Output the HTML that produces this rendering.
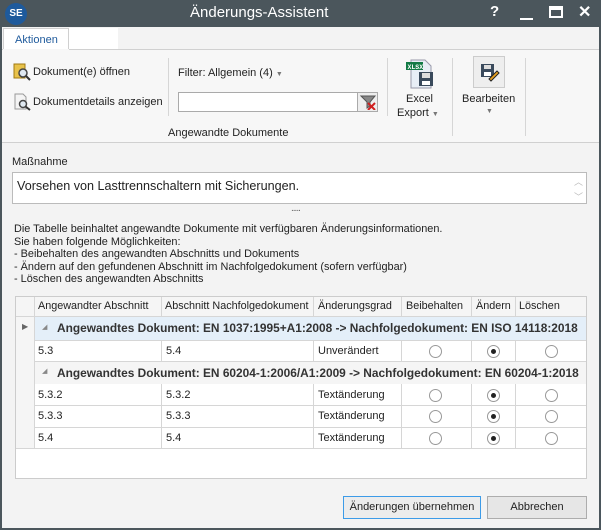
<!DOCTYPE html>
<html><head><meta charset="utf-8">
<style>
*{box-sizing:border-box;margin:0;padding:0}
html,body{width:601px;height:530px}
body{background:#4b565c;font-family:"Liberation Sans",sans-serif;font-size:11px;color:#222;position:relative;overflow:hidden}
.a{position:absolute}
.win{left:2px;top:27px;width:597px;height:501px;background:#f3f3f3}
.t{white-space:nowrap}
.radio{position:absolute;width:13px;height:13px;border:1px solid #999;border-radius:50%;background:#fff}
.radio.on::after{content:"";position:absolute;left:3px;top:3px;width:5px;height:5px;border-radius:50%;background:#222}
.hl{position:absolute;background:#d6d6d6;height:1px}
.vl{position:absolute;background:#d6d6d6;width:1px}
</style></head><body>
<div class="a" style="left:5px;top:3px;width:22px;height:22px;border-radius:50%;background:#1e5a9c;color:#fff;font-size:10px;font-weight:bold;text-align:center;line-height:22px">SE</div>
<div class="a t" style="left:190px;top:4px;color:#fff;font-size:15px">Änderungs-Assistent</div>
<div class="a t" style="left:490px;top:3px;color:#fff;font-size:15px;font-weight:bold">?</div>
<div class="a" style="left:520px;top:18px;width:13px;height:2px;background:#fff"></div>
<div class="a" style="left:549px;top:6px;width:14px;height:12px;border:2px solid #fff;border-top-width:4px"></div>
<div class="a t" style="left:578px;top:2px;color:#fff;font-size:16px;font-weight:bold">✕</div>
<div class="a win"></div>
<div class="a" style="left:3px;top:28px;width:66px;height:22px;background:#fff;border:1px solid #d0d0d0;border-bottom:none"></div>
<div class="a" style="left:69px;top:28px;width:49px;height:21px;background:#fff"></div>
<div class="a t" style="left:15px;top:34px;color:#1e5a9c">Aktionen</div>
<div class="a" style="left:2px;top:49px;width:597px;height:94px;background:#f7f7f7;border-top:1px solid #d0d0d0;border-bottom:1px solid #d0d0d0"></div>
<div class="a" style="left:3px;top:49px;width:66px;height:2px;background:#f7f7f7"></div>
<svg class="a" style="left:13px;top:63px" width="18" height="18"><rect x="1" y="1" width="11" height="14" fill="#e8c24a" stroke="#a07a10"/><circle cx="10" cy="10" r="4" fill="#dfe8f0" stroke="#444" stroke-width="1.5"/><line x1="13" y1="13" x2="17" y2="17" stroke="#333" stroke-width="2"/></svg>
<div class="a t" style="left:33px;top:66px">Dokument(e) öffnen</div>
<svg class="a" style="left:14px;top:93px" width="18" height="18"><path d="M1 1h8l3 3v12H1z" fill="#f4f4f4" stroke="#999"/><circle cx="9" cy="11" r="3.5" fill="#dfe8f0" stroke="#444" stroke-width="1.5"/><line x1="11.5" y1="13.5" x2="16" y2="17" stroke="#333" stroke-width="2"/></svg>
<div class="a t" style="left:33px;top:96px">Dokumentdetails anzeigen</div>
<div class="vl" style="left:168px;top:58px;height:58px"></div>
<div class="a t" style="left:178px;top:67px">Filter: Allgemein (4) <span style="font-size:7px;color:#777">▼</span></div>
<div class="a" style="left:178px;top:92px;width:180px;height:20px;background:#fff;border:1px solid #aaa"></div>
<div class="a" style="left:357px;top:92px;width:21px;height:20px;background:#eee;border:1px solid #aaa"></div>
<svg class="a" style="left:359px;top:94px" width="18" height="16"><path d="M2 2l6 6v6l3-2V8l5-6z" fill="#888" stroke="#555"/><path d="M9 9l7 7M16 9l-7 7" stroke="#d02020" stroke-width="2"/></svg>
<div class="a t" style="left:168px;top:127px">Angewandte Dokumente</div>
<div class="vl" style="left:387px;top:58px;height:58px"></div>
<svg class="a" style="left:403px;top:57px" width="32" height="32"><path d="M8 3h14l6 6v22H8z" fill="#e8eef6" stroke="#99a"/><rect x="3" y="5" width="17" height="8" fill="#127a45"/><text x="4.5" y="12" font-size="6.5" fill="#fff" font-family="Liberation Mono" font-weight="bold">XLSX</text><rect x="16" y="15" width="14" height="14" fill="#3a4a5c"/><rect x="19" y="16" width="8" height="5" fill="#ddd"/><rect x="19" y="24" width="8" height="4" fill="#fff"/></svg>
<div class="a t" style="left:406px;top:93px">Excel</div>
<div class="a t" style="left:397px;top:107px">Export <span style="font-size:7px;color:#777">▼</span></div>
<div class="vl" style="left:452px;top:58px;height:78px"></div>
<div class="a" style="left:473px;top:56px;width:32px;height:32px;border:1px solid #ccc;background:#eee"></div>
<svg class="a" style="left:478px;top:61px" width="22" height="22"><rect x="3" y="3" width="13" height="13" fill="#3a4a5c"/><rect x="6" y="4" width="7" height="4" fill="#ddd"/><rect x="6" y="11" width="7" height="4" fill="#fff"/><path d="M11 18l8-8 2 2-8 8z" fill="#e8a020" stroke="#222"/></svg>
<div class="a t" style="left:462px;top:93px">Bearbeiten</div>
<div class="a t" style="left:486px;top:108px;font-size:7px;color:#777">▼</div>
<div class="vl" style="left:525px;top:58px;height:78px"></div>

<div class="a t" style="left:12px;top:156px">Maßnahme</div>
<div class="a" style="left:12px;top:172px;width:575px;height:32px;background:#fff;border:1px solid #bbb"></div>
<div class="a t" style="left:17px;top:179px;font-size:12.6px">Vorsehen von Lasttrennschaltern mit Sicherungen.</div>
<div class="a t" style="left:574px;top:175px;color:#bbb;font-size:9px">︿</div>
<div class="a t" style="left:574px;top:190px;color:#bbb;font-size:9px">﹀</div>
<div class="a t" style="left:291px;top:203px;color:#666;font-size:10px;letter-spacing:-1px">.....</div>
<div class="a t" style="left:14px;top:223px;line-height:12.5px;font-size:10.9px">Die Tabelle beinhaltet angewandte Dokumente mit verfügbaren Änderungsinformationen.<br>Sie haben folgende Möglichkeiten:<br>- Beibehalten des angewandten Abschnitts und Dokuments<br>- Ändern auf den gefundenen Abschnitt im Nachfolgedokument (sofern verfügbar)<br>- Löschen des angewandten Abschnitts</div>

<div class="a" style="left:15px;top:296px;width:572px;height:183px;background:#fff;border:1px solid #ccc"></div>
<div class="a" style="left:16px;top:297px;width:570px;height:20px;background:#f5f5f5"></div>
<div class="a" style="left:16px;top:297px;width:18px;height:152px;background:#f5f5f5"></div>
<div class="a" style="left:34px;top:317px;width:552px;height:23px;background:#e4eff9"></div>
<div class="a" style="left:34px;top:362px;width:552px;height:22px;background:#f5f5f5"></div>
<div class="hl" style="left:16px;top:316px;width:570px"></div>
<div class="hl" style="left:34px;top:340px;width:552px"></div>
<div class="hl" style="left:34px;top:361px;width:552px"></div>
<div class="hl" style="left:34px;top:405px;width:552px"></div>
<div class="hl" style="left:34px;top:427px;width:552px"></div>
<div class="hl" style="left:16px;top:448px;width:570px"></div>
<div class="vl" style="left:34px;top:297px;height:152px"></div>
<div class="vl" style="left:161px;top:297px;height:20px"></div><div class="vl" style="left:313px;top:297px;height:20px"></div><div class="vl" style="left:401px;top:297px;height:20px"></div><div class="vl" style="left:471px;top:297px;height:20px"></div><div class="vl" style="left:515px;top:297px;height:20px"></div>
<div class="vl" style="left:161px;top:341px;height:20px"></div><div class="vl" style="left:313px;top:341px;height:20px"></div><div class="vl" style="left:401px;top:341px;height:20px"></div><div class="vl" style="left:471px;top:341px;height:20px"></div><div class="vl" style="left:515px;top:341px;height:20px"></div>
<div class="vl" style="left:161px;top:384px;height:64px"></div><div class="vl" style="left:313px;top:384px;height:64px"></div><div class="vl" style="left:401px;top:384px;height:64px"></div><div class="vl" style="left:471px;top:384px;height:64px"></div><div class="vl" style="left:515px;top:384px;height:64px"></div>
<div class="a t" style="left:38px;top:300px;font-size:10.8px">Angewandter Abschnitt</div>
<div class="a t" style="left:165px;top:300px;font-size:10.8px">Abschnitt Nachfolgedokument</div>
<div class="a t" style="left:318px;top:300px;font-size:10.8px">Änderungsgrad</div>
<div class="a t" style="left:406px;top:300px;font-size:10.8px">Beibehalten</div>
<div class="a t" style="left:476px;top:300px;font-size:10.8px">Ändern</div>
<div class="a t" style="left:519px;top:300px;font-size:10.8px">Löschen</div>
<div class="a t" style="left:22px;top:322px;font-size:8px;color:#666">▶</div>
<div class="a t" style="left:42px;top:323px;font-size:7px;color:#888">◢</div>
<div class="a t" style="left:57px;top:321px;font-weight:bold;font-size:11.9px;color:#333">Angewandtes Dokument: EN 1037:1995+A1:2008 -&gt; Nachfolgedokument: EN ISO 14118:2018</div>
<div class="a t" style="left:42px;top:367px;font-size:7px;color:#888">◢</div>
<div class="a t" style="left:57px;top:366px;font-weight:bold;font-size:11.9px;color:#333">Angewandtes Dokument: EN 60204-1:2006/A1:2009 -&gt; Nachfolgedokument: EN 60204-1:2018</div>
<div class="a t" style="left:38px;top:345px">5.3</div><div class="a t" style="left:166px;top:345px">5.4</div><div class="a t" style="left:318px;top:345px">Unverändert</div>
<div class="a t" style="left:38px;top:389px">5.3.2</div><div class="a t" style="left:166px;top:389px">5.3.2</div><div class="a t" style="left:318px;top:389px">Textänderung</div>
<div class="a t" style="left:38px;top:410px">5.3.3</div><div class="a t" style="left:166px;top:410px">5.3.3</div><div class="a t" style="left:318px;top:410px">Textänderung</div>
<div class="a t" style="left:38px;top:432px">5.4</div><div class="a t" style="left:166px;top:432px">5.4</div><div class="a t" style="left:318px;top:432px">Textänderung</div>
<div class="radio" style="left:429px;top:345px"></div><div class="radio on" style="left:487px;top:345px"></div><div class="radio" style="left:545px;top:345px"></div>
<div class="radio" style="left:429px;top:389px"></div><div class="radio on" style="left:487px;top:389px"></div><div class="radio" style="left:545px;top:389px"></div>
<div class="radio" style="left:429px;top:410px"></div><div class="radio on" style="left:487px;top:410px"></div><div class="radio" style="left:545px;top:410px"></div>
<div class="radio" style="left:429px;top:432px"></div><div class="radio on" style="left:487px;top:432px"></div><div class="radio" style="left:545px;top:432px"></div>

<div class="a t" style="left:343px;top:496px;width:138px;height:23px;background:#ececec;border:1px solid #3c9be8;text-align:center;line-height:21px">Änderungen übernehmen</div>
<div class="a t" style="left:487px;top:496px;width:100px;height:23px;background:#e6e6e6;border:1px solid #adadad;text-align:center;line-height:21px">Abbrechen</div>
</body></html>
